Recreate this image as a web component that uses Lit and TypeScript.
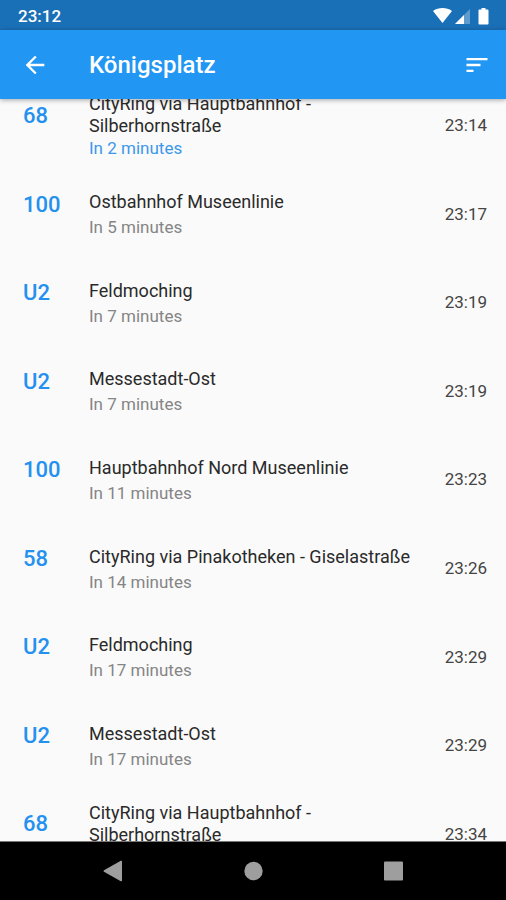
import { LitElement, html, css } from "lit";
import { customElement, property } from "lit/decorators.js";
import { classMap } from "lit/directives/class-map.js";

interface Departure {
  line: string;
  destination: string;
  minutes: number;
  time: string;
}

const departures: Departure[] = [
  { line: "68", destination: "CityRing via Hauptbahnhof - Silberhornstraße", minutes: 2, time: "23:14" },
  { line: "100", destination: "Ostbahnhof Museenlinie", minutes: 5, time: "23:17" },
  { line: "U2", destination: "Feldmoching", minutes: 7, time: "23:19" },
  { line: "U2", destination: "Messestadt-Ost", minutes: 7, time: "23:19" },
  { line: "100", destination: "Hauptbahnhof Nord Museenlinie", minutes: 11, time: "23:23" },
  { line: "58", destination: "CityRing via Pinakotheken - Giselastraße", minutes: 14, time: "23:26" },
  { line: "U2", destination: "Feldmoching", minutes: 17, time: "23:29" },
  { line: "U2", destination: "Messestadt-Ost", minutes: 17, time: "23:29" },
  { line: "68", destination: "CityRing via Hauptbahnhof - Silberhornstraße", minutes: 22, time: "23:34" },
];

@customElement("status-bar")
export class StatusBar extends LitElement {
  static styles = css`
    :host {
      display: flex;
      align-items: center;
      justify-content: space-between;
      height: 30px;
      padding: 1px 15px 0 18px;
      box-sizing: border-box;
      background: #1a70b7;
      color: #fff;
      font-size: 17px;
      line-height: 22px;
      font-weight: 500;
    }
    .icons {
      display: block;
      width: 58px;
      height: 18px;
      fill: #fff;
    }
  `;

  render() {
    return html`
      <span>23:12</span>
      <svg class="icons" viewBox="0 0 58 18" aria-label="Wi-Fi, signal, battery">
        <path d="M0 4C3 1.800 6 1 9.500 1S16 1.800 19 4L9.500 16Z" />
        <path d="M37 2V17H22Z" opacity="0.3" />
        <path d="M31 8V17H22Z" />
        <path d="M48.500 1h4v1.500h2a1 1 0 0 1 1 1v13a1 1 0 0 1-1 1h-8a1 1 0 0 1-1-1v-13a1 1 0 0 1 1-1h2Z" />
      </svg>
    `;
  }
}

@customElement("top-bar")
export class TopBar extends LitElement {
  @property() heading = "";

  static styles = css`
    :host {
      display: flex;
      align-items: center;
      height: 69px;
      padding: 0 15px 0 21px;
      box-sizing: border-box;
      background: #2196f3;
      color: #fff;
      box-shadow: 0 1px 5px rgba(0, 0, 0, 0.35);
    }
    button {
      display: flex;
      padding: 0;
      border: 0;
      background: none;
      color: inherit;
      cursor: pointer;
    }
    svg {
      width: 28px;
      height: 28px;
      fill: currentColor;
    }
    h1 {
      flex: 1;
      margin: 0 0 0 40px;
      font-size: 24px;
      line-height: 30px;
      font-weight: 500;
    }
  `;

  render() {
    return html`
      <button aria-label="Back">
        <svg viewBox="0 0 24 24"><path d="M20 11H7.830l5.590-5.590L12 4l-8 8 8 8 1.410-1.410L7.830 13H20v-2z" /></svg>
      </button>
      <h1>${this.heading}</h1>
      <button aria-label="Sort">
        <svg viewBox="0 0 24 24"><path d="M3 18h6v-2H3v2zM3 6v2h18V6H3zm0 7h12v-2H3v2z" /></svg>
      </button>
    `;
  }
}

@customElement("departure-row")
export class DepartureRow extends LitElement {
  @property({ attribute: false }) departure!: Departure;

  static styles = css`
    :host {
      display: grid;
      grid-template-columns: 66px 1fr auto;
      align-items: center;
      height: 100%;
      min-height: 88px;
      padding: 0 19px 0 23px;
      box-sizing: border-box;
    }
    .line {
      align-self: start;
      margin-top: 22px;
      font-size: 22px;
      line-height: 26px;
      font-weight: 500;
      color: #2490f0;
    }
    .text {
      padding: 2px 24px 0 0;
      line-height: 22px;
    }
    .destination {
      font-size: 18px;
      color: #2a2a2a;
    }
    .wait {
      margin-top: 3px;
      font-size: 17px;
      color: #858585;
    }
    .long .wait {
      margin-top: 0;
    }
    .soon .wait {
      color: #3c98ec;
    }
    .time {
      font-size: 17px;
      line-height: 22px;
      color: #444;
    }
  `;

  render() {
    const { line, destination, minutes, time } = this.departure;
    const classes = { text: true, long: destination.length > 42, soon: minutes < 5 };
    return html`
      <div class="line">${line}</div>
      <div class=${classMap(classes)}>
        <div class="destination">${destination}</div>
        <div class="wait">In ${minutes} minutes</div>
      </div>
      <time class="time">${time}</time>
    `;
  }
}

@customElement("navigation-bar")
export class NavigationBar extends LitElement {
  static styles = css`
    :host {
      display: flex;
      align-items: center;
      justify-content: center;
      gap: 112px;
      height: 59px;
      box-sizing: border-box;
      border-top: 1px solid #777;
      background: #000;
    }
    button {
      display: flex;
      padding: 0;
      border: 0;
      background: none;
      color: #9e9e9e;
      cursor: pointer;
    }
    svg {
      width: 28px;
      height: 28px;
      fill: currentColor;
    }
  `;

  render() {
    return html`
      <button aria-label="Back">
        <svg viewBox="0 0 28 28"><path d="M23 4.500v19a.8.8 0 0 1-1.200.7L5 14.700a.8.8 0 0 1 0-1.400L21.800 3.800a.8.8 0 0 1 1.200.7Z" /></svg>
      </button>
      <button aria-label="Home">
        <svg viewBox="0 0 28 28"><circle cx="14.500" cy="14" r="9.200" /></svg>
      </button>
      <button aria-label="Overview">
        <svg viewBox="0 0 28 28"><rect x="5" y="4.500" width="19" height="19" rx="1" /></svg>
      </button>
    `;
  }
}

@customElement("app-root")
export class AppRoot extends LitElement {
  static styles = css`
    :host {
      display: flex;
      flex-direction: column;
      height: 100vh;
      background: #fafafa;
      font-family: Roboto, "Noto Sans", sans-serif;
    }
    status-bar,
    top-bar,
    navigation-bar {
      flex: none;
    }
    top-bar {
      position: relative;
      z-index: 1;
    }
    main {
      flex: 1;
      min-height: 0;
      display: flex;
      flex-direction: column;
      overflow: hidden;
    }
    /* The list is scrolled partway, so its first and last rows run under the bars. */
    .list {
      flex: 1;
      display: grid;
      grid-auto-rows: 1fr;
      margin: -18px 0 -37px;
      padding: 0;
      list-style: none;
    }
  `;

  render() {
    return html`
      <status-bar></status-bar>
      <top-bar heading="Königsplatz"></top-bar>
      <main>
        <ul class="list">
          ${departures.map((d) => html`<li><departure-row .departure=${d}></departure-row></li>`)}
        </ul>
      </main>
      <navigation-bar></navigation-bar>
    `;
  }
}
